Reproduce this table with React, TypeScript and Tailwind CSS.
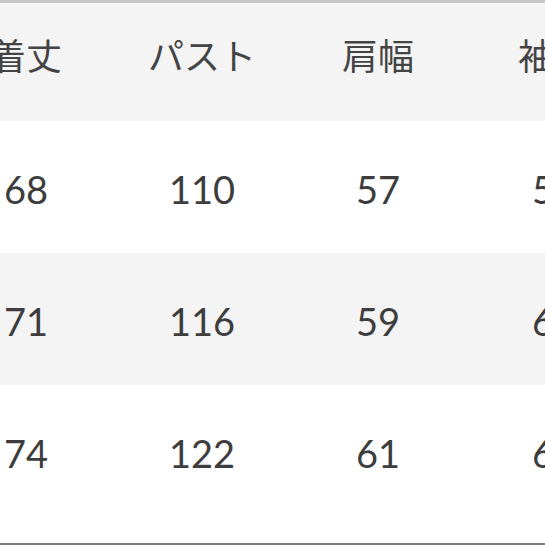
const HEADERS = ["着丈", "パスト", "肩幅", "袖丈"];

const ROWS = [
  { values: ["68", "110", "57", "58"], shaded: false },
  { values: ["71", "116", "59", "60"], shaded: true },
  { values: ["74", "122", "61", "62"], shaded: false },
];

export default function App() {
  return (
    <div
      className="w-[545px] h-[545px] overflow-hidden bg-white flex flex-col text-[#3d3d3d]"
      style={{ fontFamily: 'Lato, "Noto Sans CJK JP", sans-serif' }}
    >
      <div className="h-[3px] bg-[#c6c6c6] shrink-0" />

      {/* table shifted left so the first column is cut off like in the photo */}
      <div className="-ml-[62px] flex-1 flex flex-col">
        <div className="flex h-[118px] items-center pb-[12px] bg-[#f4f4f4] shrink-0">
          {HEADERS.map((h) => (
            <div key={h} className="w-[176px] shrink-0 text-center text-[36px] leading-none text-[#444]">
              {h}
            </div>
          ))}
        </div>

        {ROWS.map((row, i) => (
          <div
            key={i}
            className={`flex h-[132px] items-center pt-[4px] shrink-0 ${row.shaded ? "bg-[#f4f4f4]" : "bg-white"}`}
          >
            {row.values.map((v, j) => (
              <div key={j} className="w-[176px] shrink-0 text-center text-[38px] leading-none">
                {v}
              </div>
            ))}
          </div>
        ))}

        <div className="flex-1 bg-white" />
      </div>

      <div className="h-[2px] bg-[#7d7d7d] shrink-0" />
    </div>
  );
}
